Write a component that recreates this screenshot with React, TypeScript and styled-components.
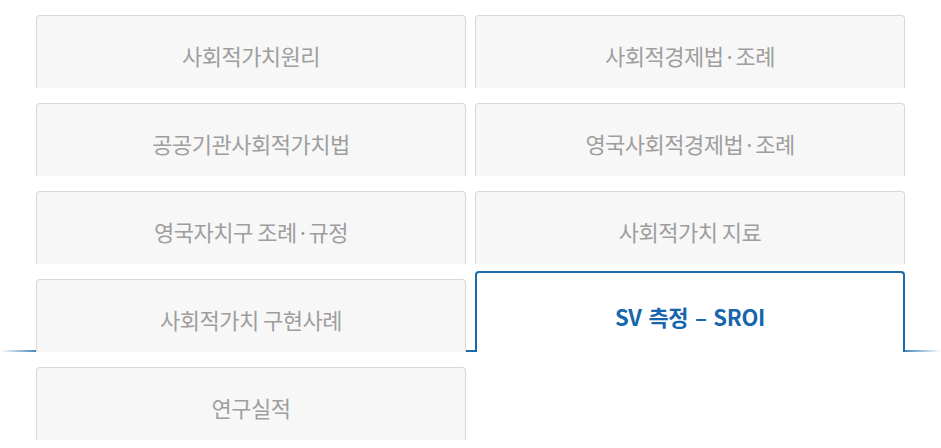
import React from "react";
import styled, { createGlobalStyle } from "styled-components";

const GlobalStyle = createGlobalStyle`
  html, body {
    margin: 0;
    padding: 0;
    background: #fff;
  }
  body {
    font-family: "Noto Sans CJK KR", "Noto Sans", sans-serif;
  }
`;

const Wrapper = styled.div`
  width: 941px;
  padding-top: 15px;
  display: flex;
  flex-direction: column;
  gap: 15px;
  overflow: hidden;
`;

const Row = styled.div<{ $active?: boolean }>`
  position: relative;
  display: flex;
  gap: 9px;
  padding-left: 36px;
  align-items: flex-end;
  ${(props) =>
    props.$active &&
    `
    &::after {
      content: "";
      position: absolute;
      left: 0;
      right: 0;
      bottom: 0;
      height: 2px;
      background: linear-gradient(to right, rgba(26, 107, 168, 0) 0, #1a6ba8 45px, #1a6ba8 calc(100% - 45px), rgba(26, 107, 168, 0) 100%);
      z-index: 0;
    }
  `}
`;

const Tab = styled.div<{ $active?: boolean }>`
  position: relative;
  z-index: 1;
  box-sizing: border-box;
  width: ${(props) => (props.$active ? "430px" : "430px")};
  height: ${(props) => (props.$active ? "81px" : "73px")};
  margin-top: ${(props) => (props.$active ? "-8px" : "0")};
  border: ${(props) => (props.$active ? "2px solid #1a6ba8" : "1px solid #d8d8d8")};
  border-bottom: none;
  border-radius: 4px 4px 0 0;
  background: ${(props) => (props.$active ? "#fff" : "#f7f7f7")};
  color: ${(props) => (props.$active ? "#1666ae" : "#9e9e9e")};
  font-size: 22px;
  font-weight: ${(props) => (props.$active ? 700 : 400)};
  letter-spacing: ${(props) => (props.$active ? "-0.3px" : "-0.5px")};
  word-spacing: ${(props) => (props.$active ? "2px" : "0")};
  display: flex;
  align-items: center;
  justify-content: center;
  padding-top: ${(props) => (props.$active ? "7px" : "6px")};
`;

const tabs = [
  ["사회적가치원리", "사회적경제법·조례"],
  ["공공기관사회적가치법", "영국사회적경제법·조례"],
  ["영국자치구 조례·규정", "사회적가치 지료"],
  ["사회적가치 구현사례", "SV 측정 – SROI"],
  ["연구실적"],
];

const activeLabel = "SV 측정 – SROI";

const App = () => {
  return (
    <Wrapper>
      <GlobalStyle />
      {tabs.map((row, i) => {
        const hasActive = row.includes(activeLabel);
        return (
          <Row key={i} $active={hasActive}>
            {row.map((label) => (
              <Tab key={label} $active={label === activeLabel}>
                {label}
              </Tab>
            ))}
          </Row>
        );
      })}
    </Wrapper>
  );
};

export default App;
